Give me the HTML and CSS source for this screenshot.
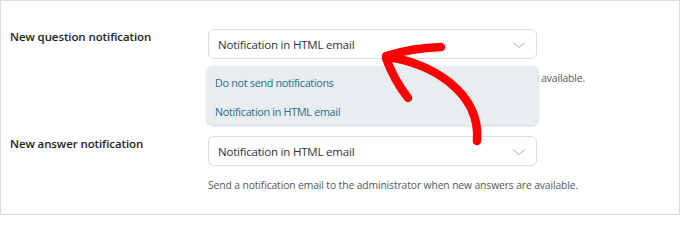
FILE: index.html
```html
<!DOCTYPE html>
<html>
<head>
<meta charset="utf-8">
<link rel="stylesheet" href="styles.css">
</head>
<body>
<div class="panel">
  <div class="row">
    <div class="label">New question notification</div>
    <div class="field">
      <div class="select">
        <span>Notification in HTML email</span>
        <svg class="chev" width="14" height="8" viewBox="0 0 14 8"><path d="M1 1.5 L7 6.5 L13 1.5" fill="none" stroke="#c8cacd" stroke-width="1.2"/></svg>
      </div>
      <div class="help">Send a notification email to the administrator when new questions are available.</div>
    </div>
  </div>
  <div class="row">
    <div class="label">New answer notification</div>
    <div class="field">
      <div class="select">
        <span>Notification in HTML email</span>
        <svg class="chev" width="14" height="8" viewBox="0 0 14 8"><path d="M1 1.5 L7 6.5 L13 1.5" fill="none" stroke="#c8cacd" stroke-width="1.2"/></svg>
      </div>
      <div class="help">Send a notification email to the administrator when new answers are available.</div>
    </div>
  </div>
  <ul class="menu">
    <li>Do not send notifications</li>
    <li>Notification in HTML email</li>
  </ul>
  <svg class="arrow" width="680" height="215" viewBox="0 0 680 215">
    <g fill="none" stroke="#ff0000" stroke-width="8.5" stroke-linecap="round" stroke-linejoin="round">
      <path d="M387 57 C430 62 481 92 477 141"/>
      <path d="M386 56 Q412 48 441 47"/>
      <path d="M386 58 Q394 80 408 98"/>
    </g>
  </svg>
</div>
</body>
</html>
```

FILE: styles.css
```css
html, body {
  margin: 0;
  padding: 0;
  background: #ffffff;
}
body {
  font-family: "Open Sans", "Noto Sans", sans-serif;
  width: 680px;
  height: 215px;
  overflow: hidden;
}
.panel {
  position: relative;
  box-sizing: border-box;
  width: 680px;
  height: 215px;
  border: 1px solid #dcdcde;
  padding: 27px 0 0 9px;
  display: flex;
  flex-direction: column;
  gap: 49px;
}
.row {
  display: grid;
  grid-template-columns: 198px 1fr;
  padding-top: 1px;
}
.label {
  font-size: 11.5px;
  font-weight: 600;
  color: #1d2327;
  line-height: 18px;
  letter-spacing: -0.1px;
  margin-top: -1px;
}
.field {
  display: flex;
  flex-direction: column;
}
.select {
  box-sizing: border-box;
  width: 329px;
  height: 30px;
  border: 1px solid #dcdcde;
  border-radius: 6px;
  display: flex;
  align-items: center;
  justify-content: space-between;
  padding: 0 9px 0 9px;
  font-size: 11.5px;
  color: #2c3338;
  letter-spacing: -0.2px;
}
.chev {
  margin-right: 1px;
  margin-top: 1px;
}
.help {
  margin-top: 11px;
  font-size: 10.3px;
  line-height: 16px;
  color: #50575e;
  letter-spacing: -0.1px;
}
.menu {
  position: absolute;
  left: 206px;
  top: 65px;
  width: 331px;
  height: 59px;
  box-sizing: border-box;
  margin: 0;
  padding: 2px 0 0 8px;
  list-style: none;
  background: #e8eef0;
  border-radius: 6px;
  box-shadow: 0 1px 3px rgba(0,0,0,0.18), 0 0 1px rgba(0,0,0,0.12);
  font-size: 10.8px;
  color: #2a6a8c;
  letter-spacing: -0.3px;
}
.menu li {
  line-height: 29px;
}
.arrow {
  position: absolute;
  left: -1px;
  top: -1px;
}
```
